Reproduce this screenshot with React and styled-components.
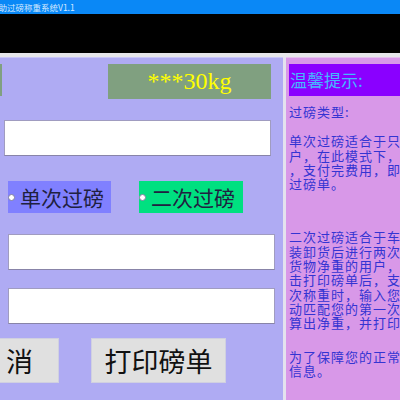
import styled, { createGlobalStyle } from 'styled-components'

const GlobalStyle = createGlobalStyle`
  html, body {
    margin: 0;
    padding: 0;
    overflow: hidden;
    background: #ffffff;
  }
`

const Window = styled.div`
  width: 400px;
  height: 400px;
  display: flex;
  flex-direction: column;
  overflow: hidden;
  font-family: "Noto Sans CJK SC", "Liberation Serif", serif;
`

const TitleBar = styled.div`
  height: 14px;
  flex: none;
  background: #0a88f6;
  color: #d4e8ff;
  font-size: 8.5px;
  line-height: 14px;
  white-space: nowrap;
  span {
    margin-left: -10px;
  }
`

const Toolbar = styled.div`
  height: 39px;
  flex: none;
  background: #000000;
`

const Strip = styled.div`
  height: 4px;
  flex: none;
  background: #e6e6ea;
`

const Main = styled.div`
  flex: 1;
  display: flex;
  gap: 3px;
  background: #e4e2ee;
  min-height: 0;
`

const LeftPanel = styled.div`
  width: 283px;
  flex: none;
  background: #afabf3;
  border-top: 1px solid #c9c6f8;
  display: flex;
  flex-direction: column;
  overflow: hidden;
`

const TopRow = styled.div`
  display: flex;
  align-items: flex-start;
  margin-top: 6px;
  height: 35px;
`

const Stub = styled.div`
  width: 2px;
  height: 32px;
  background: #80a080;
`

const WeightBox = styled.div`
  width: 163px;
  height: 35px;
  margin-left: 106px;
  background: #80a080;
  color: #ffff00;
  font-family: "Liberation Serif", serif;
  font-size: 24px;
  display: flex;
  align-items: center;
  justify-content: center;
`

const Field = styled.div`
  width: 265px;
  height: 34px;
  margin-top: ${p => p.$top}px;
  margin-left: ${p => p.$left}px;
  background: #ffffff;
  border: 1px solid #a09cc0;
  border-bottom-color: #8884a8;
`

const RadioRow = styled.div`
  display: flex;
  gap: 28px;
  margin-top: 25px;
  margin-left: 8px;
`

const Radio = styled.div`
  position: relative;
  width: ${p => p.$w}px;
  height: 32px;
  background: ${p => p.$bg};
  color: #202040;
  font-size: 21px;
  line-height: 32px;
  padding-left: 12px;
  box-sizing: border-box;
  white-space: nowrap;
  &::before {
    content: '';
    position: absolute;
    left: 0;
    top: 13px;
    width: 5px;
    height: 5px;
    border-radius: 50%;
    background: #ffffff;
    border: 0.5px solid #8080a0;
  }
`

const ButtonRow = styled.div`
  display: flex;
  gap: 32px;
  margin-top: 14px;
`

const Button = styled.div`
  flex: none;
  width: ${p => p.$w}px;
  height: 45px;
  margin-left: ${p => p.$left || 0}px;
  padding-right: ${p => p.$padRight || 0}px;
  background: #e0e0e0;
  border: 1px solid #d0d0e0;
  box-sizing: border-box;
  color: #111111;
  font-size: 27px;
  display: flex;
  align-items: center;
  justify-content: ${p => (p.$padRight ? 'flex-end' : 'center')};
  white-space: nowrap;
`

const RightPanel = styled.div`
  width: 200px;
  flex: none;
  background: #d898e8;
  border-top: 1px solid #e4c0ee;
  padding: 6px 0 0 3px;
  overflow: hidden;
  color: #3434d2;
  font-size: 13px;
  letter-spacing: 1px;
  line-height: 14.3px;
  white-space: nowrap;
`

const NoticeHead = styled.div`
  height: 32px;
  background: #8a00ff;
  color: #45b8ff;
  font-size: 17px;
  letter-spacing: 0;
  line-height: 32px;
  padding-left: 1px;
`

const Para = styled.p`
  margin: ${p => p.$top}px 0 0 0;
`

export default function App() {
  return (
    <>
      <GlobalStyle />
      <Window>
        <TitleBar><span>自助过磅称重系统V1.1</span></TitleBar>
        <Toolbar />
        <Strip />
        <Main>
          <LeftPanel>
            <TopRow>
              <Stub />
              <WeightBox>***30kg</WeightBox>
            </TopRow>
            <Field $top={21} $left={4} />
            <RadioRow>
              <Radio $w={103} $bg="#8080ff">单次过磅</Radio>
              <Radio $w={104} $bg="#00e080">二次过磅</Radio>
            </RadioRow>
            <Field $top={21} $left={8} />
            <Field $top={18} $left={8} />
            <ButtonRow>
              <Button $w={110} $left={-51} $padRight={25}>取 消</Button>
              <Button $w={135}>打印磅单</Button>
            </ButtonRow>
          </LeftPanel>
          <RightPanel>
            <NoticeHead>温馨提示:</NoticeHead>
            <Para $top={9}>过磅类型:</Para>
            <Para $top={15}>
              单次过磅适合于只过一次磅的客<br />
              户，在此模式下，过磅完成后<br />
              ，支付完费用，即可打印<br />
              过磅单。
            </Para>
            <Para $top={39}>
              二次过磅适合于车辆需要<br />
              装卸货后进行两次过磅计算<br />
              货物净重的用户，第一次点<br />
              击打印磅单后，支付费用，二<br />
              次称重时，输入您的单号自<br />
              动匹配您的第一次称重信息，<br />
              算出净重，并打印磅单。
            </Para>
            <Para $top={19}>
              为了保障您的正常使用，请保存好<br />
              信息。
            </Para>
          </RightPanel>
        </Main>
      </Window>
    </>
  )
}
